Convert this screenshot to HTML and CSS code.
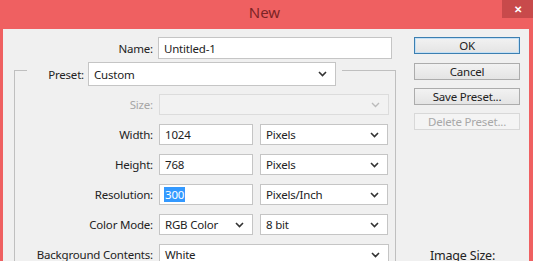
FILE: index.html
```html
<!DOCTYPE html>
<html lang="en">
<head>
    <meta charset="UTF-8">
    <meta name="viewport" content="width=device-width, initial-scale=1.0">
    <title>New</title>
    <link rel="stylesheet" href="styles.css">
</head>
<body>
    <div class="window">
        <div class="titlebar">
            <span class="title">New</span>
            <span class="close">&#x2715;</span>
        </div>
        <div class="dialog">
            <div class="form">
                <div class="row name-row">
                    <label class="label">Name:</label>
                    <div class="input wide">Untitled-1</div>
                </div>

                <div class="group">
                    <div class="group-head">
                        <div class="corner-left"></div>
                        <label class="preset-label">Preset:</label>
                        <div class="select preset">
                            <span>Custom</span>
                            <svg class="chev" width="9" height="6" viewBox="0 0 9 6"><path d="M1 1 L4.5 4.5 L8 1" fill="none" stroke="#333" stroke-width="1.6"/></svg>
                        </div>
                        <div class="corner-right"></div>
                    </div>
                    <div class="group-body">
                        <div class="row">
                            <label class="label disabled">Size:</label>
                            <div class="select full disabled">
                                <span></span>
                                <svg class="chev" width="9" height="6" viewBox="0 0 9 6"><path d="M1 1 L4.5 4.5 L8 1" fill="none" stroke="#bbb" stroke-width="1.4"/></svg>
                            </div>
                        </div>
                        <div class="row">
                            <label class="label">Width:</label>
                            <div class="input num">1024</div>
                            <div class="select unit">
                                <span>Pixels</span>
                                <svg class="chev" width="9" height="6" viewBox="0 0 9 6"><path d="M1 1 L4.5 4.5 L8 1" fill="none" stroke="#333" stroke-width="1.6"/></svg>
                            </div>
                        </div>
                        <div class="row">
                            <label class="label">Height:</label>
                            <div class="input num">768</div>
                            <div class="select unit">
                                <span>Pixels</span>
                                <svg class="chev" width="9" height="6" viewBox="0 0 9 6"><path d="M1 1 L4.5 4.5 L8 1" fill="none" stroke="#333" stroke-width="1.6"/></svg>
                            </div>
                        </div>
                        <div class="row">
                            <label class="label">Resolution:</label>
                            <div class="input num"><span class="selected">300</span></div>
                            <div class="select unit">
                                <span>Pixels/Inch</span>
                                <svg class="chev" width="9" height="6" viewBox="0 0 9 6"><path d="M1 1 L4.5 4.5 L8 1" fill="none" stroke="#333" stroke-width="1.6"/></svg>
                            </div>
                        </div>
                        <div class="row">
                            <label class="label">Color Mode:</label>
                            <div class="select num">
                                <span>RGB Color</span>
                                <svg class="chev" width="9" height="6" viewBox="0 0 9 6"><path d="M1 1 L4.5 4.5 L8 1" fill="none" stroke="#333" stroke-width="1.6"/></svg>
                            </div>
                            <div class="select unit">
                                <span>8 bit</span>
                                <svg class="chev" width="9" height="6" viewBox="0 0 9 6"><path d="M1 1 L4.5 4.5 L8 1" fill="none" stroke="#333" stroke-width="1.6"/></svg>
                            </div>
                        </div>
                        <div class="row">
                            <label class="label">Background Contents:</label>
                            <div class="select full">
                                <span>White</span>
                                <svg class="chev" width="9" height="6" viewBox="0 0 9 6"><path d="M1 1 L4.5 4.5 L8 1" fill="none" stroke="#333" stroke-width="1.6"/></svg>
                            </div>
                        </div>
                    </div>
                </div>
            </div>

            <div class="buttons">
                <button class="btn default">OK</button>
                <button class="btn">Cancel</button>
                <button class="btn">Save Preset...</button>
                <button class="btn" disabled>Delete Preset...</button>
                <div class="image-size">Image Size:</div>
            </div>
        </div>
    </div>
</body>
</html>
```

FILE: styles.css
```css
body {
    margin: 0;
    padding: 0;
    width: 533px;
    height: 261px;
    overflow: hidden;
    font-family: "Noto Sans", "Open Sans", sans-serif;
    font-size: 11.5px;
    letter-spacing: -0.2px;
    color: #222;
}

.window {
    background: #ef6061;
    height: 261px;
    display: flex;
    flex-direction: column;
}

.titlebar {
    height: 29px;
    flex-shrink: 0;
    display: flex;
    justify-content: center;
    align-items: center;
    position: relative;
}

.title {
    font-size: 15px;
    letter-spacing: 0;
    color: #7d2426;
    margin-top: -5px;
    margin-left: -4px;
}

.close {
    position: absolute;
    right: 0;
    top: 0;
    width: 31px;
    height: 18px;
    background: #c84a4b;
    color: #fff;
    font-size: 10px;
    font-weight: bold;
    text-align: center;
    line-height: 18px;
}

.dialog {
    flex: 1;
    margin: 0 4px 0 3px;
    background: #f0f0f0;
    display: flex;
    padding-top: 8px;
    overflow: hidden;
}

.form {
    margin-left: 11px;
    width: 382px;
}

.row {
    display: flex;
    align-items: center;
    height: 21px;
}

.label {
    width: 138px;
    text-align: right;
    margin-right: 6px;
    flex-shrink: 0;
}

.name-row {
    height: 22px;
}

.name-row .label {
    width: 139px;
    margin-right: 5px;
}

.label.disabled {
    color: #a6a6a6;
}

.input, .select {
    box-sizing: border-box;
    height: 100%;
    background: #fff;
    border: 1px solid #c5c5c5;
    display: flex;
    align-items: center;
    padding: 0 6px 0 5px;
}

.wide {
    width: 234px;
}

.num {
    width: 94px;
    margin-right: 7px;
}

.unit {
    width: 128px;
}

.full {
    width: 230px;
}

.select {
    justify-content: space-between;
}

.select.disabled {
    background: #f2f2f2;
    border-color: #dcdcdc;
}

.chev {
    flex-shrink: 0;
    margin-right: 2px;
}

.selected {
    background: #3399ff;
    color: #fff;
    padding: 0 1px;
    margin-left: -1px;
}

.group-head {
    display: flex;
    height: 24px;
    margin-top: 3px;
}

.corner-left {
    width: 12px;
    margin-top: 8px;
    border-top: 1px solid #bfbfbf;
    border-left: 1px solid #bfbfbf;
}

.preset-label {
    width: 57px;
    text-align: right;
    align-self: center;
    margin-right: 4px;
}

.preset {
    width: 248px;
}

.corner-right {
    flex: 1;
    margin-left: 6px;
    margin-top: 8px;
    border-top: 1px solid #bfbfbf;
    border-right: 1px solid #bfbfbf;
}

.group-body {
    border-left: 1px solid #bfbfbf;
    border-right: 1px solid #bfbfbf;
    padding-top: 8px;
    display: flex;
    flex-direction: column;
    gap: 9px;
    height: 200px;
}

.buttons {
    margin-left: 18px;
    width: 106px;
    display: flex;
    flex-direction: column;
    gap: 8px;
}

.btn {
    height: 19px;
    padding: 0;
    font-family: inherit;
    font-size: 11.5px;
    letter-spacing: inherit;
    color: #222;
    background: linear-gradient(#f2f2f2, #e4e4e4);
    border: 1px solid #acacac;
}

.btn.default {
    height: 21px;
    border: 1px solid #3c7fb1;
    box-shadow: inset 0 0 0 1px #c4e0f5;
    margin-bottom: 1px;
}

.btn:disabled {
    color: #a8a8a8;
    background: #f4f4f4;
    border-color: #d8d8d8;
}

.image-size {
    margin-top: 109px;
    padding-left: 16px;
    font-size: 12.5px;
}
```
